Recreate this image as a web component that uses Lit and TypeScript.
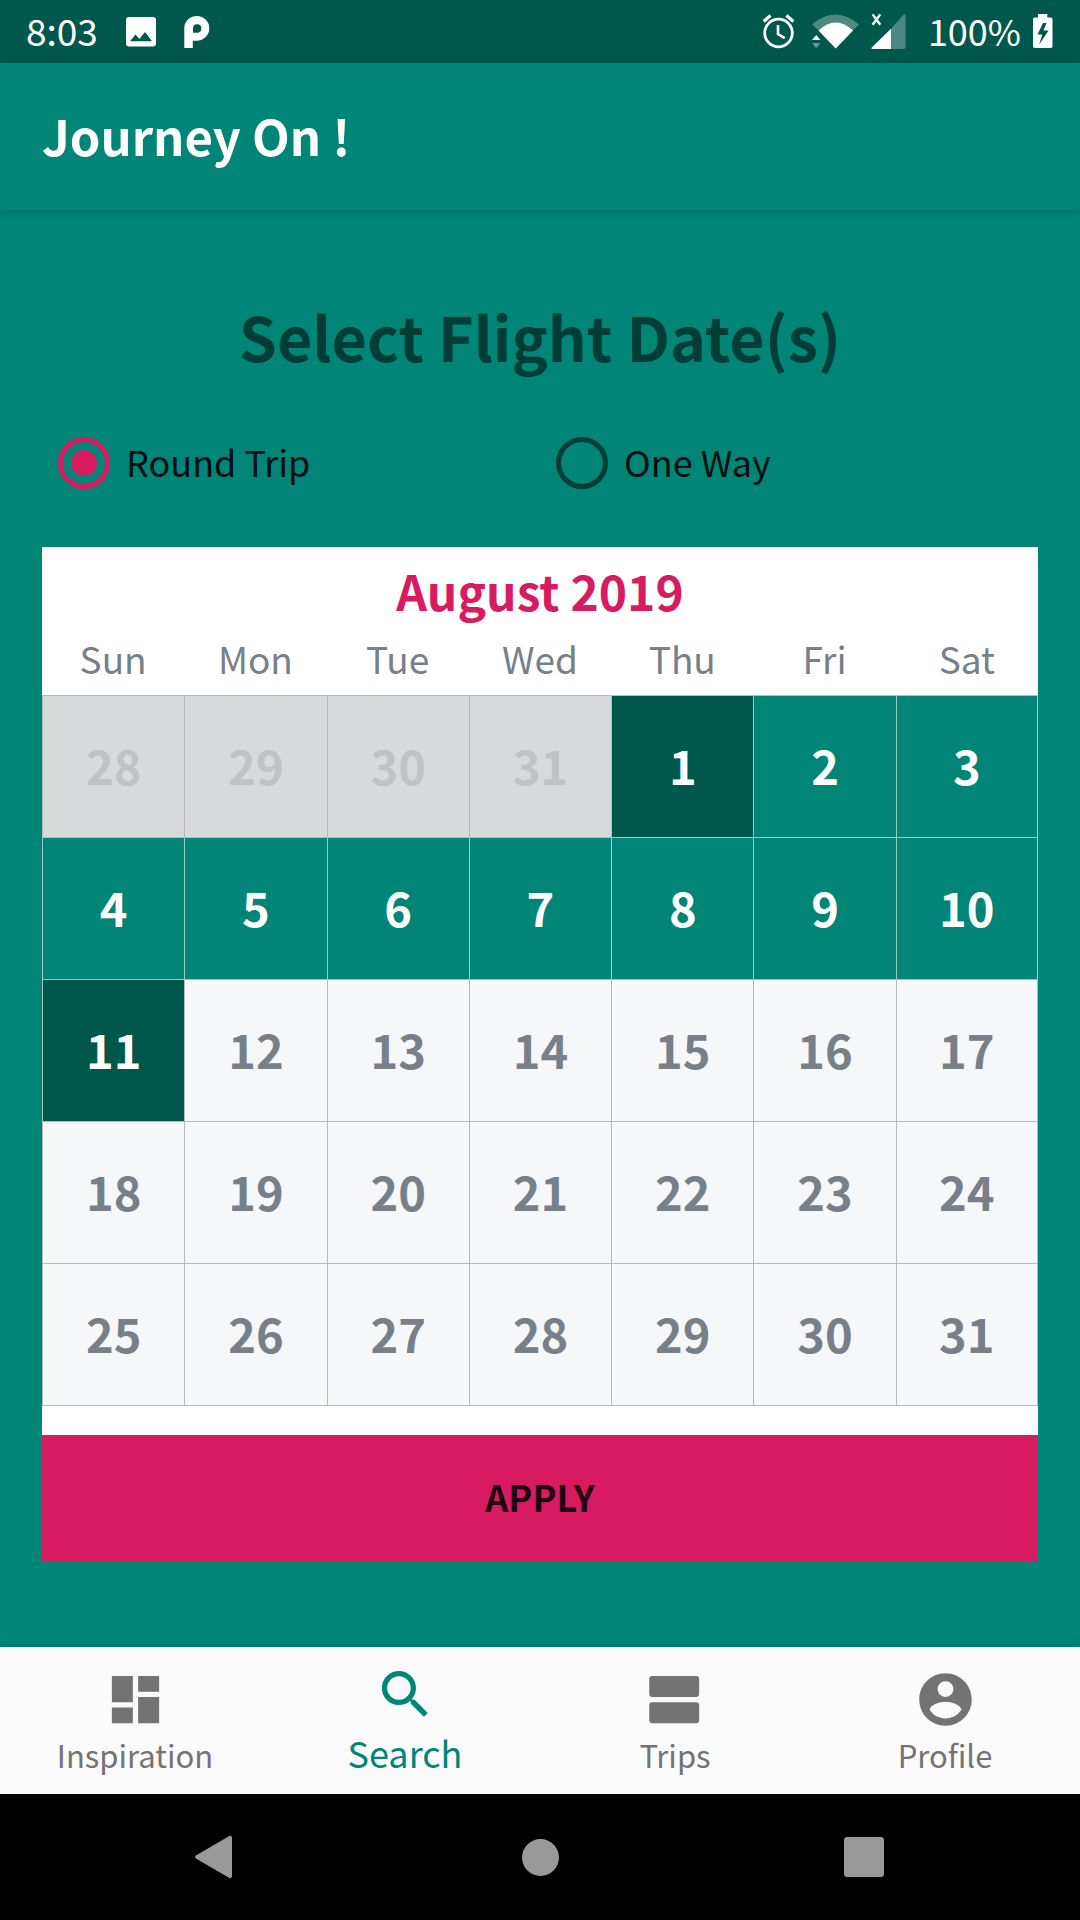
import { LitElement, html, css, svg } from "lit";
import { customElement, state, property } from "lit/decorators.js";
import { classMap } from "lit/directives/class-map.js";

const WEEKDAYS = ["Sun", "Mon", "Tue", "Wed", "Thu", "Fri", "Sat"];
const FONT = css`"Noto Sans CJK SC", "Noto Sans", "Open Sans", sans-serif`;

@customElement("status-bar")
export class StatusBar extends LitElement {
  static styles = css`
    :host {
      display: flex;
      align-items: center;
      justify-content: space-between;
      height: 63px;
      padding: 0 27px 0 26px;
      background: #00574b;
      color: #fff;
      font-size: 37px;
      line-height: 58px;
    }
    .group {
      display: flex;
      align-items: center;
      gap: 28px;
    }
    .system {
      gap: 12px;
      font-size: 36px;
    }
    .text {
      padding-bottom: 4px;
    }
    .percent {
      padding-left: 10px;
    }
    svg {
      display: block;
    }
  `;

  render() {
    return html`
      <div class="group">
        <span class="text">8:03</span>
        <svg width="30" height="37" viewBox="125 13 30 37" aria-hidden="true">
          <path
            fill="#fff"
            fill-rule="evenodd"
            d="M128 17H152A3 3 0 0 1 155 20V43.400A3 3 0 0 1 152 46.400H128A3 3 0 0 1 125 43.400V20A3 3 0 0 1 128 17ZM129 41.300H151L144 32L138.400 39L134.500 34.500Z"
          />
        </svg>
        <svg width="26" height="37" viewBox="185 13 26 37" aria-hidden="true">
          <path
            fill="#fff"
            fill-rule="evenodd"
            d="M185.300 48V28.400A12.500 12.400 0 1 1 197.800 40.700H193.800V48ZM194 32.700V28.300A4.200 4.200 0 1 1 198.200 32.700Z"
          />
        </svg>
      </div>
      <div class="group system">
        <svg width="37" height="37" viewBox="762 13 37 37" aria-hidden="true">
          <g fill="none" stroke="#fff">
            <circle cx="777.500" cy="33" r="13.800" stroke-width="2.800" />
            <path d="M762.600 21.400L769.600 15.600M785.400 15.600L792.400 21.400" stroke-width="3.200" />
            <path d="M777 25V34L783.700 38.200" stroke-width="2.600" />
          </g>
        </svg>
        <svg width="47" height="37" viewBox="813 13 47 37" aria-hidden="true">
          <path fill="#fff" opacity=".3" d="M813 24.500Q836.500 4.500 860 24.500L853.500 31L836.700 48.500L820 31Z" />
          <path fill="#fff" d="M819.500 30.500Q836.700 14.500 854 30.500L836.700 48.500Z" />
          <path fill="#fff" d="M813 40L817.200 35L821.400 40Z" />
          <path fill="#fff" opacity=".4" d="M813 43H821.400L817.200 48Z" />
        </svg>
        <svg width="35" height="37" viewBox="872 13 35 37" aria-hidden="true">
          <path fill="#fff" opacity=".3" d="M892 28.700L904.500 14.800Q906.500 13.500 906.500 16V47Q906.500 49 904.500 49H892Z" />
          <path fill="#fff" d="M892 28.700V49H873.500Q871.500 48.500 873 47.300Z" />
          <path stroke="#fff" stroke-width="2.400" d="M873.600 14.400L881.200 24.800M881.200 14.400L873.600 24.800" />
        </svg>
        <span class="text percent">100%</span>
        <svg width="20" height="37" viewBox="1033 13 20 37" aria-hidden="true">
          <path
            fill="#fff"
            fill-rule="evenodd"
            d="M1038 14H1047.300V17.500H1050.800Q1052.500 17.500 1052.500 19.200V46.200Q1052.500 48 1050.800 48H1034.800Q1033 48 1033 46.200V19.200Q1033 17.500 1034.800 17.500H1038ZM1043 23L1037.500 34.500H1042.200L1039.200 44.500L1048.600 30.600H1043.500L1046.500 23Z"
          />
        </svg>
      </div>
    `;
  }
}

@customElement("month-calendar")
export class MonthCalendar extends LitElement {
  @property() heading = "";
  /** Days of the preceding month that fill the first row. */
  @property({ attribute: false }) leading: number[] = [];
  @property({ type: Number }) days = 31;
  @state() private from = 1;
  @state() private to = 11;

  static styles = css`
    :host {
      display: block;
      background: #fff;
      padding-bottom: 29px;
      color: #778088;
    }
    table {
      width: 100%;
      table-layout: fixed;
      border-collapse: separate;
      border-spacing: 0;
    }
    caption {
      padding-top: 8px;
      font-size: 48px;
      line-height: 70px;
      font-weight: 700;
      color: #d81b60;
    }
    th {
      padding: 0 0 4px;
      font-size: 37px;
      line-height: 66px;
      font-weight: 400;
    }
    td {
      padding: 0;
      border: 0 solid #b5b9b9;
      border-top-width: 1px;
      border-left-width: 1px;
      background: #f5f7f9;
    }
    td:last-child {
      border-right-width: 1px;
    }
    tr:last-child td {
      border-bottom-width: 1px;
    }
    .outside {
      background: #d7d9db;
      color: #bec3c6;
    }
    .range {
      background: #008577;
      border-color: #a3c8c2;
      color: #fff;
    }
    .end {
      background: #00574b;
    }
    button {
      display: block;
      width: 100%;
      height: 141px;
      padding: 0 0 4px;
      border: 0;
      background: none;
      color: inherit;
      font: inherit;
      font-size: 47px;
      font-weight: 700;
      cursor: pointer;
    }
  `;

  private pick(day: number) {
    if (this.from === this.to && day > this.from) this.to = day;
    else this.from = this.to = day;
  }

  render() {
    const cells = [
      ...this.leading.map((day) => ({ day, outside: true })),
      ...Array.from({ length: this.days }, (_, i) => ({ day: i + 1, outside: false })),
    ];
    const weeks = [];
    for (let i = 0; i < cells.length; i += 7) weeks.push(cells.slice(i, i + 7));
    return html`
      <table>
        <caption>${this.heading}</caption>
        <thead>
          <tr>${WEEKDAYS.map((d) => html`<th scope="col">${d}</th>`)}</tr>
        </thead>
        <tbody>
          ${weeks.map(
            (week) => html`<tr>
              ${week.map(({ day, outside }) => {
                const range = !outside && day >= this.from && day <= this.to;
                const end = !outside && (day === this.from || day === this.to);
                return html`<td class=${classMap({ outside, range, end })}>
                  <button type="button" ?disabled=${outside} @click=${() => this.pick(day)}>${day}</button>
                </td>`;
              })}
            </tr>`
          )}
        </tbody>
      </table>
    `;
  }
}

const TABS = [
  { label: "Inspiration", icon: svg`<path d="M3 13h8V3H3v10zm0 8h8v-6H3v6zm10 0h8V11h-8v10zm0-18v6h8V3h-8z"/>` },
  {
    label: "Search",
    icon: svg`<path d="M15.500 14h-.79l-.28-.27C15.410 12.590 16 11.110 16 9.500 16 5.910 13.090 3 9.500 3S3 5.910 3 9.500 5.910 16 9.500 16c1.610 0 3.090-.59 4.230-1.570l.27.28v.79l5 4.990L20.490 19l-4.990-5zm-6 0C7.010 14 5 11.990 5 9.500S7.010 5 9.500 5 14 7.010 14 9.500 11.990 14 9.500 14z"/>`,
  },
  {
    label: "Trips",
    icon: svg`<path d="M20 13H3c-.55 0-1 .45-1 1v6c0 .55.45 1 1 1h17c.55 0 1-.45 1-1v-6c0-.55-.45-1-1-1zm0-10H3c-.55 0-1 .45-1 1v6c0 .55.45 1 1 1h17c.55 0 1-.45 1-1V4c0-.55-.45-1-1-1z"/>`,
  },
  {
    label: "Profile",
    icon: svg`<path d="M12 2C6.480 2 2 6.480 2 12s4.480 10 10 10 10-4.480 10-10S17.520 2 12 2zm0 3c1.660 0 3 1.340 3 3s-1.340 3-3 3-3-1.340-3-3 1.340-3 3-3zm0 14.200c-2.500 0-4.710-1.280-6-3.220.03-1.990 4-3.080 6-3.080 1.990 0 5.970 1.090 6 3.080-1.290 1.940-3.500 3.220-6 3.220z"/>`,
  },
];

@customElement("app-root")
export class AppRoot extends LitElement {
  @state() private trip = "round";

  static styles = css`
    :host {
      display: flex;
      flex-direction: column;
      min-height: 100vh;
      background: #008577;
      font-family: ${FONT};
    }
    .appbar {
      display: flex;
      align-items: center;
      height: 147px;
      box-sizing: border-box;
      padding: 0 42px 4px;
      color: #fff;
      box-shadow: 0 2px 8px rgba(0, 0, 0, 0.18);
    }
    h1 {
      margin: 0;
      font-size: 49px;
      line-height: 72px;
      font-weight: 700;
    }
    main {
      flex: 1;
      padding: 86px 42px 84px;
    }
    h2 {
      margin: 0 0 45px;
      font-size: 61px;
      line-height: 80px;
      font-weight: 700;
      text-align: center;
      color: rgba(0, 0, 0, 0.54);
    }
    .trips {
      display: grid;
      grid-template-columns: 1fr 1fr;
      margin: 0 0 42px;
      padding: 0;
      border: 0;
    }
    .trip {
      display: flex;
      align-items: center;
      gap: 16px;
      height: 84px;
      padding-left: 16px;
      font-size: 36px;
      color: rgba(0, 0, 0, 0.9);
    }
    .trip span {
      padding-bottom: 4px;
    }
    .trip input {
      appearance: none;
      flex: none;
      width: 52px;
      height: 52px;
      box-sizing: border-box;
      margin: 0;
      padding: 8px;
      border: 5px solid rgba(0, 0, 0, 0.54);
      border-radius: 50%;
    }
    .trip input:checked {
      border-color: #d81b60;
      background: #d81b60 content-box;
    }
    .apply {
      display: block;
      width: 100%;
      height: 126px;
      padding: 0 0 4px;
      border: 0;
      background: #d81b60;
      color: rgba(0, 0, 0, 0.87);
      font: inherit;
      font-size: 36px;
      font-weight: 700;
      cursor: pointer;
    }
    .tabs {
      display: grid;
      grid-template-columns: repeat(4, 1fr);
      background: #fafafa;
      box-shadow: 0 -1px 8px rgba(0, 0, 0, 0.15);
    }
    .tab {
      display: flex;
      flex-direction: column;
      align-items: center;
      gap: 6px;
      padding: 21px 0;
      color: #737373;
      font-size: 31px;
      line-height: 36px;
      text-decoration: none;
    }
    .tab svg {
      width: 63px;
      height: 63px;
      fill: currentColor;
    }
    .tab.active {
      gap: 8px;
      padding-top: 16px;
      color: #008577;
      font-size: 36px;
    }
    .system {
      display: grid;
      grid-template-columns: repeat(3, 1fr);
      height: 126px;
      padding: 0 54px;
      background: #000;
    }
    .system button {
      display: flex;
      align-items: center;
      justify-content: center;
      padding: 0;
      border: 0;
      background: none;
    }
    .system svg {
      width: 48px;
      height: 48px;
      fill: #999;
    }
  `;

  private radio(value: string, label: string) {
    return html`<label class="trip">
      <input
        type="radio"
        name="trip"
        .value=${value}
        .checked=${this.trip === value}
        @change=${() => (this.trip = value)}
      />
      <span>${label}</span>
    </label>`;
  }

  render() {
    return html`
      <status-bar></status-bar>
      <header class="appbar"><h1>Journey On !</h1></header>
      <main>
        <h2>Select Flight Date(s)</h2>
        <fieldset class="trips">
          ${this.radio("round", "Round Trip")} ${this.radio("oneway", "One Way")}
        </fieldset>
        <month-calendar heading="August 2019" .leading=${[28, 29, 30, 31]} .days=${31}></month-calendar>
        <button class="apply" type="button">APPLY</button>
      </main>
      <nav class="tabs">
        ${TABS.map(
          (tab) => html`<a
            href="#${tab.label.toLowerCase()}"
            class=${classMap({ tab: true, active: tab.label === "Search" })}
          >
            <svg viewBox="0 0 24 24" aria-hidden="true">${tab.icon}</svg>
            <span>${tab.label}</span>
          </a>`
        )}
      </nav>
      <div class="system">
        <button type="button" aria-label="Back">
          <svg viewBox="0 0 48 48">
            <path d="M3.800 22.400L36.500 3.400Q39.800 1.800 40 5V43Q39.800 46.200 36.500 44.600L3.800 25.600Q2 24 3.800 22.400Z" />
          </svg>
        </button>
        <button type="button" aria-label="Home">
          <svg viewBox="0 0 48 48"><circle cx="24.500" cy="24.500" r="18.500" /></svg>
        </button>
        <button type="button" aria-label="Recents">
          <svg viewBox="0 0 48 48"><rect x="4" y="4" width="40" height="40" rx="3" /></svg>
        </button>
      </div>
    `;
  }
}
